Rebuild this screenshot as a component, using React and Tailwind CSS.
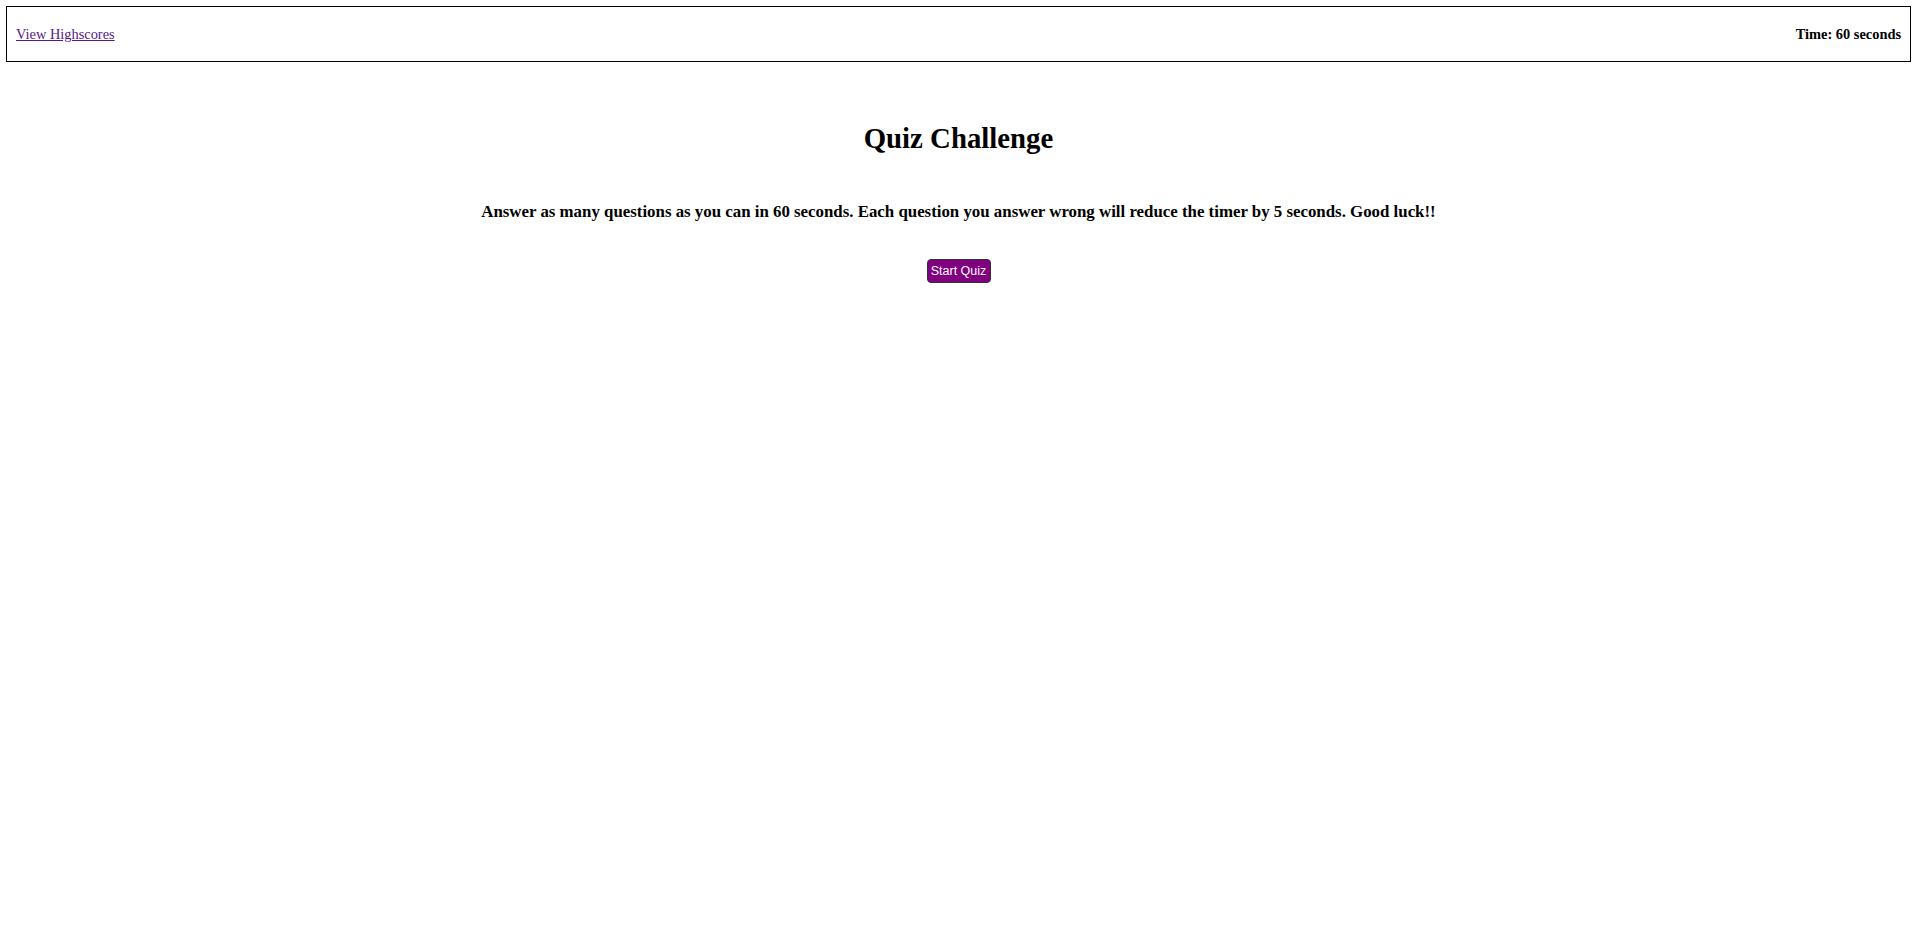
export default function App() {
  return (
    <div className="min-h-screen bg-white p-[6px] font-['Liberation_Serif',serif] text-black">
      <header className="flex h-[56px] items-center justify-between border border-black px-[9px] pt-[2px]">
        <a href="#highscores" className="text-[14.4px] text-[#551a8b] underline">
          View Highscores
        </a>
        <span className="text-[14.4px] font-bold">Time: 60 seconds</span>
      </header>
      <main className="flex flex-col items-center">
        <h1 className="mt-[60px] text-[28.8px] font-bold leading-[33px]">Quiz Challenge</h1>
        <h3 className="mt-[47px] text-[16.85px] font-bold leading-[19px]">
          Answer as many questions as you can in 60 seconds. Each question you answer wrong will reduce the timer by 5 seconds. Good luck!!
        </h3>
        <button
          type="button"
          className="mt-[38px] h-[24px] w-[64px] rounded-[4px] border border-[#333] bg-[#800080] font-['Liberation_Sans',Arial,sans-serif] text-[12.5px] text-white"
        >
          Start Quiz
        </button>
      </main>
    </div>
  );
}
